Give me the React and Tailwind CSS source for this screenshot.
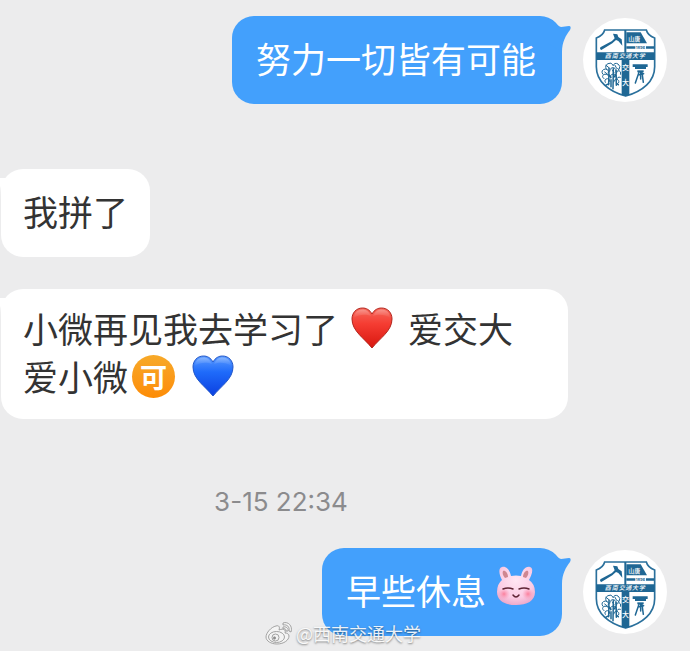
function Crest() {
  return (
    <svg viewBox="39 39 252 252" className="size-[84px] shrink-0" role="img" aria-label="西南交通大学">
      <circle cx="165" cy="165" r="126" fill="#fff" />
      <path
        d="M104 75H229Q233 91 254 99V185C254 229 218 259 167 273C116 259 79 229 79 185V99Q100 91 104 75Z"
        fill="#fff"
        stroke="#2a709c"
        strokeWidth="5"
      />
      <g fill="#1f6794">
        <path d="M79 142H254V165H79Z" />
        <path d="M155 163H178V270L167 274L155 270Z" />
        <path d="M163 75H169V145H163Z" />
        <path d="M169 82H212L231 115H169Z" />
        <path d="M169 124H196V131H169ZM228 124H252V131H228Z" />
        <path d="M129 86L142 88L145 96L155 103L157 122L145 108L138 105L127 115L94 135L90 132L91 127L126 108L134 100Z" />
        <path d="M188 178H233V186H188ZM195 186H228V192H195Z" />
        <path d="M202 196H221V202H202Z" />
      </g>
      <g fill="none" stroke="#1f6794" strokeWidth="4.5" strokeLinecap="round" strokeLinejoin="round">
        <path d="M207 202L196 234M216 202L220 232M212 202V222M207 209L221 206" />
        <path strokeWidth="3" d="M109 193q-6-12 5-17q10-6 15 4M129 182q5-11 15-5q9 6 4 15M98 207q-7-12 8-15q12 2 9 11M119 199q1-12 12-11q10 4 7 13M139 205q0-9 8-8q7 2 5 11M102 221q-9-7 0-13q10-4 15 6M121 219q-2-10 9-12q12 1 9 12M141 223q0-9 10-6M106 232q-5-9 6-11q9 1 8 9M131 231q0-8 9-8q9 2 6 10M108 181l10 8M135 181l5 9M104 201l9 7M127 195l5 8M143 190l4 5" />
        <path d="M116 239L117 190M129 251L130 191M139 241L138 196M107 241L117 235M145 239L139 234M123 217L116 208M123 224V245M132 216L138 208" />
      </g>
      <g fill="#fff" fontFamily="'Noto Sans CJK SC', sans-serif" fontWeight="500">
        <text x="175" y="109" fontSize="18">山唐</text>
        <text y="160" fontSize="18" fontStyle="italic">
          <tspan x="104">西</tspan>
          <tspan x="125">南</tspan>
          <tspan x="146">交</tspan>
          <tspan x="166">通</tspan>
          <tspan x="186">大</tspan>
          <tspan x="206">学</tspan>
        </text>
        <text x="156" y="195" fontSize="21">交</text>
        <text x="156" y="241" fontSize="21">大</text>
      </g>
      <text x="197" y="132" fontSize="12" fontFamily="Inter, sans-serif" fontWeight="700" fill="#1f6794">1896</text>
    </svg>
  );
}

function Heart({ id, top, middle, bottom, edge, label, className }) {
  return (
    <svg viewBox="0 0 42 42" className={`size-[42px] ${className}`} role="img" aria-label={label}>
      <defs>
        <linearGradient id={id} x1="0" y1="0" x2="0" y2="1">
          <stop offset="0" stopColor={top} />
          <stop offset="0.4" stopColor={middle} />
          <stop offset="1" stopColor={bottom} />
        </linearGradient>
        <linearGradient id={`${id}-shine`} x1="0" y1="0" x2="0" y2="1">
          <stop offset="0" stopColor="#fff" stopOpacity="0.3" />
          <stop offset="1" stopColor="#fff" stopOpacity="0" />
        </linearGradient>
      </defs>
      <path
        d="M21 7C18.500 2.500 15 1 11.500 1C5 1 1 6 1 12C1 24 13 31 21 41C29 31 41 24 41 12C41 6 37 1 30.500 1C27 1 23.500 2.500 21 7Z"
        fill={`url(#${id})`}
        stroke={edge}
        strokeWidth="1"
      />
      <path d="M20 9C18 4.500 15 2.500 11.500 2.500C6 2.500 3 6.500 3 11C8 7 15 7 20 9Z" fill={`url(#${id}-shine)`} />
      <path d="M22 9C24 4.500 27 2.500 30.500 2.500C36 2.500 39 6.500 39 11C34 7 27 7 22 9Z" fill={`url(#${id}-shine)`} />
    </svg>
  );
}

function Rabbit() {
  return (
    <svg viewBox="0 0 40 40" className="ml-[10px] size-10 self-start" role="img" aria-label="兔子">
      <defs>
        <radialGradient id="fur" cx="0.5" cy="0.35" r="0.7">
          <stop offset="0" stopColor="#ffe6f3" />
          <stop offset="0.65" stopColor="#fbcce4" />
          <stop offset="1" stopColor="#eba3c6" />
        </radialGradient>
        <radialGradient id="cheek">
          <stop offset="0" stopColor="#fb7f9c" />
          <stop offset="1" stopColor="#fb9fbc" stopOpacity="0" />
        </radialGradient>
      </defs>
      <path
        d="M6 14C3 8 2 2 6 1C11 0 14 5 15 10Q20 9 25 10C26 5 29 0 34 1C38 2 36 9 33 14Q39 18 39 26C39 35 31 39 20 39C9 39 1 35 1 26Q1 18 6 14Z"
        fill="url(#fur)"
      />
      <path d="M7 5C9 4 12 7 12 11L9 12C7 10 6 7 7 5Z" fill="#cf8791" />
      <path d="M32 5C30 4 27 7 27 11L30 12C32 10 33 7 32 5Z" fill="#cf8791" />
      <circle cx="8" cy="28" r="6" fill="url(#cheek)" />
      <circle cx="32" cy="28" r="6" fill="url(#cheek)" />
      <g fill="none" stroke="#5e2434" strokeWidth="1.500" strokeLinecap="round">
        <path d="M7 23Q12 21 17 23" />
        <path d="M23 23Q28 21 33 23" />
        <path d="M17 29Q20 33 23 29" />
      </g>
    </svg>
  );
}

function Sent({ children }) {
  return (
    <div className="flex items-start justify-end gap-[21px] pr-[23px]">
      <div className="relative rounded-[22px] bg-[#43a0fc] pt-[18px] pr-[26px] pb-[22px] pl-6 text-white">
        {children}
        <svg viewBox="0 0 24 34" className="absolute top-[3px] -right-[9px] h-[34px] w-6">
          <path d="M0 0C8 0 9 7 14 8C17 8 19 7 22 7C24 7 24 9 23 11C19 16 15 23 15 33L0 24Z" fill="#43a0fc" />
        </svg>
      </div>
      <div className="pt-[2px]">
        <Crest />
      </div>
    </div>
  );
}

function Received({ children, className }) {
  return (
    <div className="flex pl-px">
      <div className={`relative rounded-[22px] bg-white px-[22px] text-[#333] ${className}`}>
        {children}
        <svg viewBox="0 0 16 26" className="absolute top-[9px] -left-px h-[26px] w-4">
          <path d="M0 0H16V26H1Q1 10 0 8Z" fill="#fff" />
        </svg>
      </div>
    </div>
  );
}

export default function App() {
  return (
    <main className="relative min-h-screen overflow-hidden bg-[#ececed] pt-4 pb-[15px] font-['Noto_Sans_CJK_SC',sans-serif] text-[35px] leading-[48px]">
      <Sent>努力一切皆有可能</Sent>

      <div className="mt-[65px] flex flex-col gap-8">
        <Received className="pt-[18px] pb-[22px]">我拼了</Received>
        <Received className="w-full max-w-[567px] pt-[15px] pb-[19px]">
          <p className="flex h-12 items-center">
            <span>小微再见我去学习了</span>
            <Heart
              id="red"
              label="红心"
              top="#f5695c"
              middle="#f53c32"
              bottom="#d8170f"
              edge="#b3261e"
              className="mr-[15px] ml-[13px]"
            />
            <span>爱交大</span>
          </p>
          <p className="flex h-12 items-center">
            <span>爱小微</span>
            <span className="mr-[17px] ml-1 flex size-[43px] items-center justify-center rounded-full bg-linear-to-b from-[#f7a928] to-[#fd8c04] text-[27px] leading-none font-bold text-white">
              可
            </span>
            <Heart id="blue" label="蓝心" top="#5b9bff" middle="#1f6bfa" bottom="#0b3fe0" edge="#2458c8" />
          </p>
        </Received>
      </div>

      <time className="mt-[67px] mb-[30px] block pr-[128px] text-center font-[Inter,sans-serif] text-[26px] leading-8 text-[#8b8b8d]">
        3-15 22:34
      </time>

      <Sent>
        <p className="flex h-12 items-center">
          早些休息
          <Rabbit />
        </p>
      </Sent>

      <footer className="absolute inset-x-0 bottom-[6px] flex items-center justify-center gap-[3px] pr-1 text-lg leading-6 text-white/90 [text-shadow:0_1px_2px_rgba(0,0,0,0.5)]">
        <svg viewBox="0 0 28 24" className="h-6 w-7" fill="#f4f4f4" stroke="#9a9a9a" strokeWidth="0.900">
          <path d="M11 5C6 6 1 12 1 16C1 20 6 23 12 23C19 23 24 19 24 15C24 13 22 12 20 12C21 9 19 7 14 9C15 6 14 4 11 5Z" />
          <ellipse cx="11.500" cy="16" rx="8" ry="5.500" />
          <circle cx="10.500" cy="16.500" r="3.500" />
          <circle cx="9.500" cy="17" r="1.200" fill="#8a8a8a" />
          <path d="M18 2C23 0 28 5 26 11L24 10C25 6 22 3 18 4Z" />
          <path d="M18 6C21 5 24 8 23 10L21 10C21 8 20 7 18 8Z" />
        </svg>
        <span>@西南交通大学</span>
      </footer>
    </main>
  );
}
